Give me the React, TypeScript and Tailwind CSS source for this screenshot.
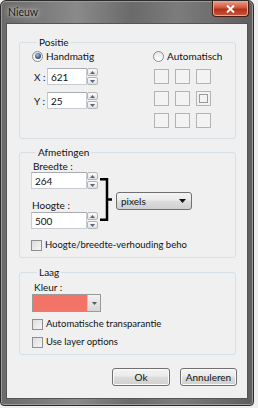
import React from 'react';

function Spinner() {
  return (
    <div className="flex flex-col w-[11px] h-[17px] gap-[1px]">
      {['up', 'down'].map((d) => (
        <div
          key={d}
          className="flex-1 flex items-center justify-center border border-[#b5b5b5] rounded-[2px] bg-[linear-gradient(#fafafa,#e2e2e2)]"
        >
          <svg width="5" height="3" viewBox="0 0 5 3">
            <path d={d === 'up' ? 'M0 3 L2.5 0 L5 3 Z' : 'M0 0 L2.5 3 L5 0 Z'} fill="#56657a" />
          </svg>
        </div>
      ))}
    </div>
  );
}

function NumberBox({ value, width }: { value: string; width: string }) {
  return (
    <div className="flex items-center h-[17px]">
      <div
        className={`${width} h-[17px] flex items-center pl-[3px] bg-white border border-[#c9cbd2] border-t-[#a9abb3] text-[10px] text-[#111]`}
      >
        {value}
      </div>
      <Spinner />
    </div>
  );
}

function Radio({ checked }: { checked?: boolean }) {
  return (
    <div className="w-[11px] h-[11px] shrink-0 rounded-full border border-[#8a8b8c] bg-[linear-gradient(#e6e6e6,#ffffff)] flex items-center justify-center">
      {checked && (
        <div className="w-[6px] h-[6px] rounded-full bg-[radial-gradient(circle_at_40%_35%,#a9c4e4,#2a4a72_70%)]" />
      )}
    </div>
  );
}

function Checkbox() {
  return (
    <div className="w-[11px] h-[11px] border border-[#8e8f8f] bg-[linear-gradient(135deg,#dcdcdc,#f6f6f6)] shrink-0" />
  );
}

function Button({ label, width }: { label: string; width: string }) {
  return (
    <div
      className={`${width} h-[18px] rounded-[3px] border border-[#707070] bg-[linear-gradient(#f4f4f4_0%,#ebebeb_45%,#dddddd_50%,#cfcfcf_100%)] flex items-center justify-center text-[10px] text-[#111] shadow-[inset_0_0_0_1px_#fbfbfb]`}
    >
      {label}
    </div>
  );
}

function Square({ selected }: { selected?: boolean }) {
  return (
    <div className="w-[15px] h-[15px] border border-[#b3b3b3] bg-[#f3f3f3] flex items-center justify-center">
      {selected && <div className="w-[9px] h-[9px] border border-[#9a9a9a]" />}
    </div>
  );
}

export default function App() {
  return (
    <div className="w-[258px] h-[408px] bg-[#efefef] font-['Lato',sans-serif]">
      <div className="w-[254px] h-[406px] rounded-t-[6px] rounded-b-[4px] border border-[#2b2b2b] bg-[linear-gradient(to_right,#6a6a6a,#8a8a8a_30%,#6a6a6a_52%,#7c7c7c_70%,#5e5e5e)] flex flex-col shadow-[inset_0_0_0_1px_#9a9a9a]">
        {/* title bar */}
        <div className="h-[22px] flex items-start justify-between pl-[7px] pr-[4px]">
          <span className="mt-[5px] text-[10.5px] leading-[13px] text-[#151515] [text-shadow:0_0_6px_#dcdcdc,0_0_3px_#dcdcdc]">
            Nieuw
          </span>
          <div className="w-[37px] h-[16px] rounded-b-[4px] border border-t-0 border-[#4a1a12] bg-[linear-gradient(#e7a08f_0%,#d2553b_45%,#b5301a_55%,#c8583e_100%)] flex items-center justify-center shadow-[inset_0_0_0_1px_#e9a796]">
            <svg width="9" height="8" viewBox="0 0 9 8">
              <path d="M1 0.5 L8 7.5 M8 0.5 L1 7.5" stroke="#fff" strokeWidth="2" />
            </svg>
          </div>
        </div>

        {/* client area */}
        <div className="mx-[5px] h-[376px] border border-[#555] bg-[#f0f0f0] pt-[12px] pl-[12px] pr-[9px] text-[9.5px] text-[#111] leading-[12px]">
          {/* Positie */}
          <fieldset className="w-[217px] h-[103px] border border-[#d5dfe5] rounded-[3px] pl-[12px]">
            <legend className="ml-[5px] px-[2px] leading-[13px] text-[10px]">Positie</legend>
            <div className="flex mt-[1px]">
              <div className="w-[121px] flex flex-col">
                <div className="flex items-center gap-[3px] h-[12px]">
                  <Radio checked />
                  <span className="text-[10px]">Handmatig</span>
                </div>
                <div className="flex items-center mt-[6px]">
                  <span className="w-[15px] pl-[2px] text-[10px]">X :</span>
                  <NumberBox value="621" width="w-[40px]" />
                </div>
                <div className="flex items-center mt-[7px]">
                  <span className="w-[15px] pl-[2px] text-[10px]">Y :</span>
                  <NumberBox value="25" width="w-[40px]" />
                </div>
              </div>
              <div className="flex flex-col">
                <div className="flex items-center gap-[3px] h-[12px]">
                  <Radio />
                  <span className="text-[10px]">Automatisch</span>
                </div>
                <div className="grid grid-cols-3 gap-x-[6px] gap-y-[7px] mt-[7px] ml-[1px] w-[57px]">
                  <Square />
                  <Square />
                  <Square />
                  <Square />
                  <Square />
                  <Square selected />
                  <Square />
                  <Square />
                  <Square />
                </div>
              </div>
            </div>
          </fieldset>

          {/* Afmetingen */}
          <fieldset className="mt-[6px] w-[217px] h-[113px] border border-[#d5dfe5] rounded-[3px] pl-[11px]">
            <legend className="ml-[5px] px-[2px] leading-[14px] text-[10px]">Afmetingen</legend>
            <div className="flex items-start mt-[2px]">
              <div className="flex flex-col">
                <span className="pl-[2px] leading-[11px] text-[10px]">Breedte :</span>
                <NumberBox value="264" width="w-[56px]" />
                <span className="mt-[11px] pl-[1px] leading-[11px] text-[10px]">Hoogte :</span>
                <div className="mt-[1px]">
                  <NumberBox value="500" width="w-[56px]" />
                </div>
              </div>
              <svg className="mt-[17px] ml-[2px]" width="12" height="43" viewBox="0 0 12 43">
                <path d="M0 1.25 H7 V41.75 H0 M7 21.5 H12" stroke="#000" strokeWidth="2.5" fill="none" />
              </svg>
              <div className="mt-[31px] ml-[4px] w-[76px] h-[18px] rounded-[3px] border border-[#707070] bg-[linear-gradient(#f4f4f4_0%,#ebebeb_45%,#dddddd_50%,#cfcfcf_100%)] flex items-center justify-between pl-[4px] pr-[5px] text-[10px]">
                <span>pixels</span>
                <svg width="7" height="4" viewBox="0 0 7 4">
                  <path d="M0 0 H7 L3.5 4 Z" fill="#111" />
                </svg>
              </div>
            </div>
            <div className="flex items-center gap-[3px] mt-[10px]">
              <Checkbox />
              <span className="block w-[142px] overflow-hidden whitespace-nowrap">
                Hoogte/breedte-verhouding behouden
              </span>
            </div>
          </fieldset>

          {/* Laag */}
          <fieldset className="mt-[7px] w-[217px] h-[90px] border border-[#d5dfe5] rounded-[3px] pl-[12px]">
            <legend className="ml-[5px] px-[2px] leading-[14px] text-[10px]">Laag</legend>
            <span className="block mt-[3px] pl-[2px] leading-[11px] text-[10px]">Kleur :</span>
            <div className="flex mt-[1px] w-[69px] h-[18px] border border-[#9a9a9a] bg-[#e8e8e8]">
              <div className="w-[55px] h-full bg-[#f27466] border-r border-[#c9c9c9]" />
              <div className="flex-1 flex items-center justify-center bg-[linear-gradient(#f2f2f2,#d6d6d6)]">
                <svg width="5" height="3" viewBox="0 0 5 3">
                  <path d="M0 0 H5 L2.5 3 Z" fill="#555" />
                </svg>
              </div>
            </div>
            <div className="flex items-center gap-[3px] mt-[6px]">
              <Checkbox />
              <span>Automatische transparantie</span>
            </div>
            <div className="flex items-center gap-[3px] mt-[6px]">
              <Checkbox />
              <span>Use layer options</span>
            </div>
          </fieldset>

          {/* buttons */}
          <div className="flex justify-end gap-[10px] mt-[13px] pr-[1px]">
            <Button label="Ok" width="w-[58px]" />
            <Button label="Annuleren" width="w-[57px]" />
          </div>
        </div>
      </div>
    </div>
  );
}
